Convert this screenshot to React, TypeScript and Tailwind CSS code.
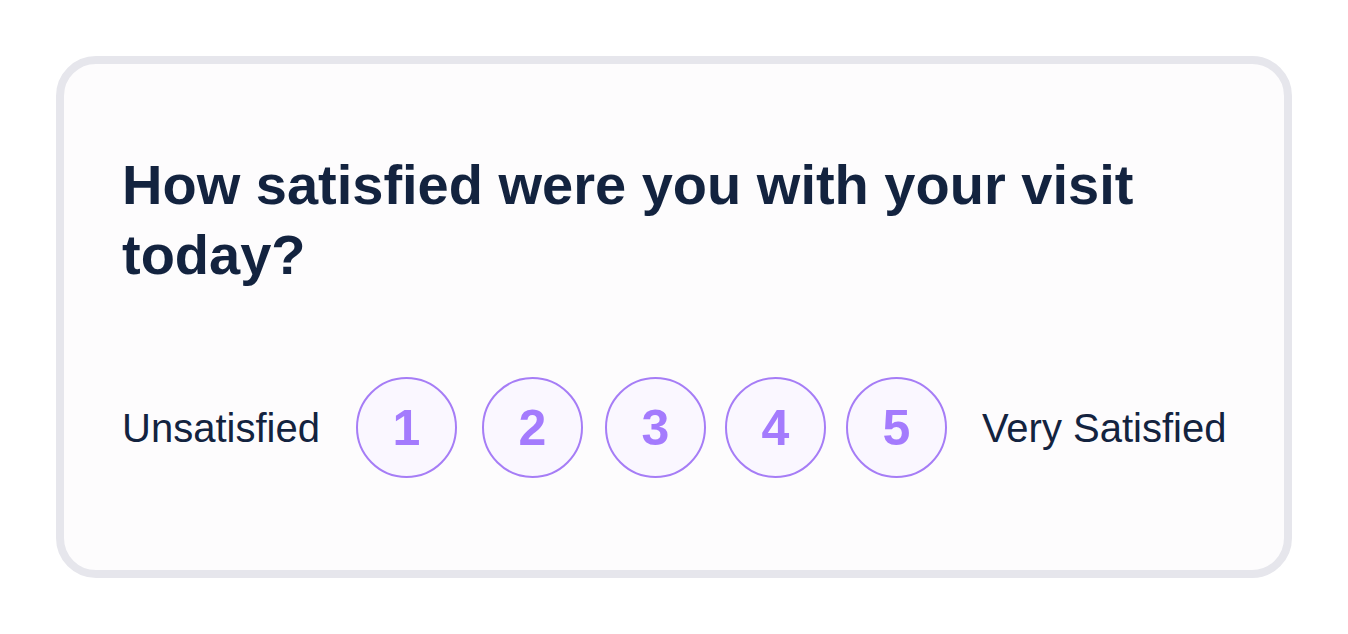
export default function App() {
  const scale = [
    { n: 1, ml: 'ml-[36px]' },
    { n: 2, ml: 'ml-[25px]' },
    { n: 3, ml: 'ml-[22px]' },
    { n: 4, ml: 'ml-[19px]' },
    { n: 5, ml: 'ml-[20px]' },
  ]

  return (
    <div className="min-h-screen bg-white p-14 font-['Liberation_Sans',Arial,sans-serif]">
      <div className="rounded-[40px] border-8 border-[#e6e6ec] bg-[#fdfcfd] pl-[58px] pr-14 pt-[86px] pb-[92px]">
        <h1 className="text-[56px] font-bold leading-[70px] text-[#13233f]">
          How satisfied were you with your visit today?
        </h1>

        <div className="mt-[87px] flex items-center">
          <span className="text-[40px] leading-none text-[#13233f]">Unsatisfied</span>
          {scale.map((s) => (
            <button
              key={s.n}
              className={`${s.ml} flex h-[101px] w-[101px] shrink-0 items-center justify-center rounded-full border-2 border-[#a67df6] bg-[#faf7ff] text-[50px] font-bold leading-none text-[#a47bfd]`}
            >
              {s.n}
            </button>
          ))}
          <span className="ml-[35px] text-[40px] leading-none text-[#13233f]">Very Satisfied</span>
        </div>
      </div>
    </div>
  )
}
